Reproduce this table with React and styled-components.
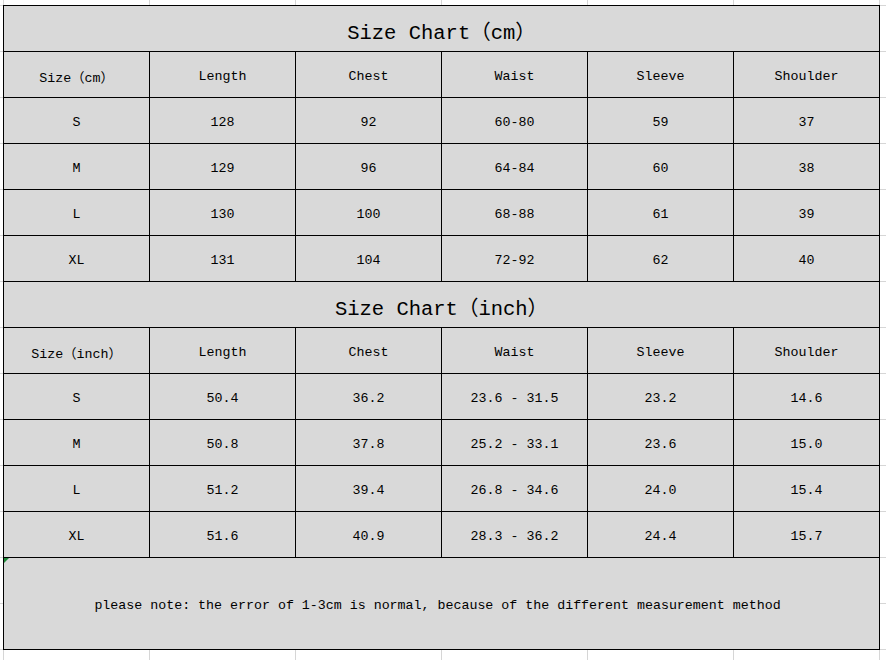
import React from "react";
import styled, { createGlobalStyle } from "styled-components";

const Global = createGlobalStyle`
  html, body { margin: 0; padding: 0; background: #ffffff; }
  body { width: 886px; height: 660px; overflow: hidden; }
`;

const Sheet = styled.div`
  width: 886px;
  height: 660px;
  box-sizing: border-box;
  padding: 5px 0 0 3px;
  background-color: #ffffff;
  background-image:
    linear-gradient(to right, #d6d6d6 1px, transparent 1px),
    linear-gradient(to bottom, #d6d6d6 1px, transparent 1px);
  background-size: 146px 46px;
  background-position: 3px 5px;
`;

const Table = styled.div`
  display: grid;
  grid-template-columns: repeat(6, 146px);
  grid-auto-rows: 46px;
  width: max-content;
  border-left: 1px solid #000;
  border-top: 1px solid #000;
  background: #d9d9d9;
  font-family: "Liberation Mono", "Noto Sans CJK SC", monospace;
  color: #000;
`;

const Cell = styled.div`
  box-sizing: border-box;
  border-right: 1px solid #000;
  border-bottom: 1px solid #000;
  display: flex;
  align-items: center;
  justify-content: center;
  padding-top: 3px;
  font-size: 13.3px;
  white-space: pre;
`;

const Title = styled(Cell)`
  grid-column: 1 / -1;
  font-size: 20.5px;
  padding-top: 3px;
`;

const Note = styled(Cell)`
  grid-column: 1 / -1;
  grid-row: span 2;
  position: relative;
  padding: 4px 8px 0 0;
`;

const ErrorMark = styled.span`
  position: absolute;
  left: 0;
  top: 0;
  width: 0;
  height: 0;
  border-top: 5px solid #1f8a3a;
  border-right: 5px solid transparent;
`;

const headers = ["Length", "Chest", "Waist", "Sleeve", "Shoulder"];

const cmRows = [
  ["S", "128", "92", "60-80", "59", "37"],
  ["M", "129", "96", "64-84", "60", "38"],
  ["L", "130", "100", "68-88", "61", "39"],
  ["XL", "131", "104", "72-92", "62", "40"],
];

const inchRows = [
  ["S", "50.4", "36.2", "23.6 - 31.5", "23.2", "14.6"],
  ["M", "50.8", "37.8", "25.2 - 33.1", "23.6", "15.0"],
  ["L", "51.2", "39.4", "26.8 - 34.6", "24.0", "15.4"],
  ["XL", "51.6", "40.9", "28.3 - 36.2", "24.4", "15.7"],
];

function Section({ title, first, rows }) {
  return (
    <>
      <Title>{title}</Title>
      <Cell>{first}</Cell>
      {headers.map((h) => (
        <Cell key={h}>{h}</Cell>
      ))}
      {rows.map((r) =>
        r.map((v, i) => <Cell key={r[0] + i}>{v}</Cell>)
      )}
    </>
  );
}

export default function App() {
  return (
    <>
      <Global />
      <Sheet>
        <Table>
          <Section title="Size Chart（cm）" first="Size（cm）" rows={cmRows} />
          <Section title="Size Chart（inch）" first="Size（inch）" rows={inchRows} />
          <Note>
            <ErrorMark />
            please note: the error of 1-3cm is normal, because of the different measurement method
          </Note>
        </Table>
      </Sheet>
    </>
  );
}
